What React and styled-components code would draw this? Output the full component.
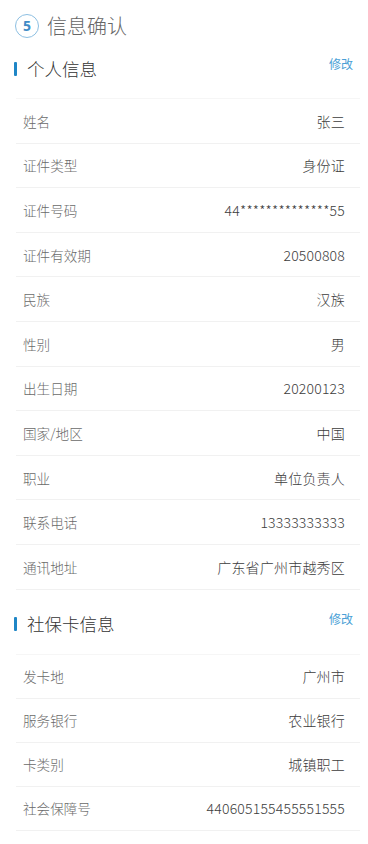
import React from "react";
import styled, { createGlobalStyle } from "styled-components";

const Global = createGlobalStyle`
  html, body { margin: 0; padding: 0; background: #fff; }
  body { font-family: "Noto Sans CJK SC", "Noto Sans", "Liberation Sans", sans-serif; }
`;

const Page = styled.div`
  width: 368px;
  background: #fff;
  padding-bottom: 14px;
`;

const TitleRow = styled.div`
  display: flex;
  align-items: center;
  gap: 8px;
  height: 30px;
  padding: 11px 0 0 15px;
`;

const StepCircle = styled.div`
  width: 22px;
  height: 22px;
  border: 1.5px solid #8dbfe2;
  border-radius: 50%;
  display: flex;
  align-items: center;
  justify-content: center;
  color: #3f8bc6;
  font-size: 14px;
  font-weight: 700;
  font-family: "Noto Sans", "Liberation Sans", sans-serif;
  line-height: 1;
`;

const Title = styled.div`
  font-size: 20px;
  color: #666;
  line-height: 1;
  font-weight: 300;
`;

const SectionHead = styled.div`
  display: flex;
  justify-content: space-between;
  align-items: flex-start;
  height: ${(p) => p.$h}px;
  padding: ${(p) => p.$top}px 15px 0 14px;
  box-sizing: border-box;
`;

const HeadLeft = styled.div`
  display: flex;
  align-items: center;
  gap: 10px;
`;

const Bar = styled.span`
  display: block;
  width: 3px;
  height: 14px;
  background: #1f86c6;
  border-radius: 1px;
`;

const HeadTitle = styled.div`
  font-size: 17.5px;
  color: #333;
  line-height: 20px;
  font-weight: 300;
`;

const EditLink = styled.a`
  font-size: 12px;
  color: #4a9fd6;
  line-height: 16px;
  text-decoration: none;
  margin-top: -3px;
`;

const List = styled.div`
  display: flex;
  flex-direction: column;
  margin: 0 8px 0 16px;
  border-top: 1px solid #f6f6f6;
`;

const Row = styled.div`
  display: flex;
  justify-content: space-between;
  align-items: center;
  height: ${(p) => p.$h}px;
  box-sizing: border-box;
  padding: 0 15px 0 7px;
  border-bottom: 1px solid #f1f1f1;
  font-size: 14px;
  font-weight: 300;
`;

const Label = styled.span`
  color: #6a6a6a;
  font-size: 13.6px;
`;

const Value = styled.span`
  color: #3c3c3c;
  letter-spacing: 0.2px;
`;

const personal = [
  ["姓名", "张三"],
  ["证件类型", "身份证"],
  ["证件号码", "44**************55"],
  ["证件有效期", "20500808"],
  ["民族", "汉族"],
  ["性别", "男"],
  ["出生日期", "20200123"],
  ["国家/地区", "中国"],
  ["职业", "单位负责人"],
  ["联系电话", "13333333333"],
  ["通讯地址", "广东省广州市越秀区"],
];

const card = [
  ["发卡地", "广州市"],
  ["服务银行", "农业银行"],
  ["卡类别", "城镇职工"],
  ["社会保障号", "440605155455551555"],
];

function Section({ title, rows, rowH, top, headH }) {
  return (
    <>
      <SectionHead $h={headH} $top={top}>
        <HeadLeft>
          <Bar />
          <HeadTitle>{title}</HeadTitle>
        </HeadLeft>
        <EditLink>修改</EditLink>
      </SectionHead>
      <List>
        {rows.map(([l, v]) => (
          <Row key={l} $h={rowH}>
            <Label>{l}</Label>
            <Value>{v}</Value>
          </Row>
        ))}
      </List>
    </>
  );
}

export default function App() {
  return (
    <Page>
      <Global />
      <TitleRow>
        <StepCircle>5</StepCircle>
        <Title>信息确认</Title>
      </TitleRow>
      <Section title="个人信息" rows={personal} rowH={44.6} top={18} headH={57} />
      <Section title="社保卡信息" rows={card} rowH={44} top={24} headH={64} />
    </Page>
  );
}
